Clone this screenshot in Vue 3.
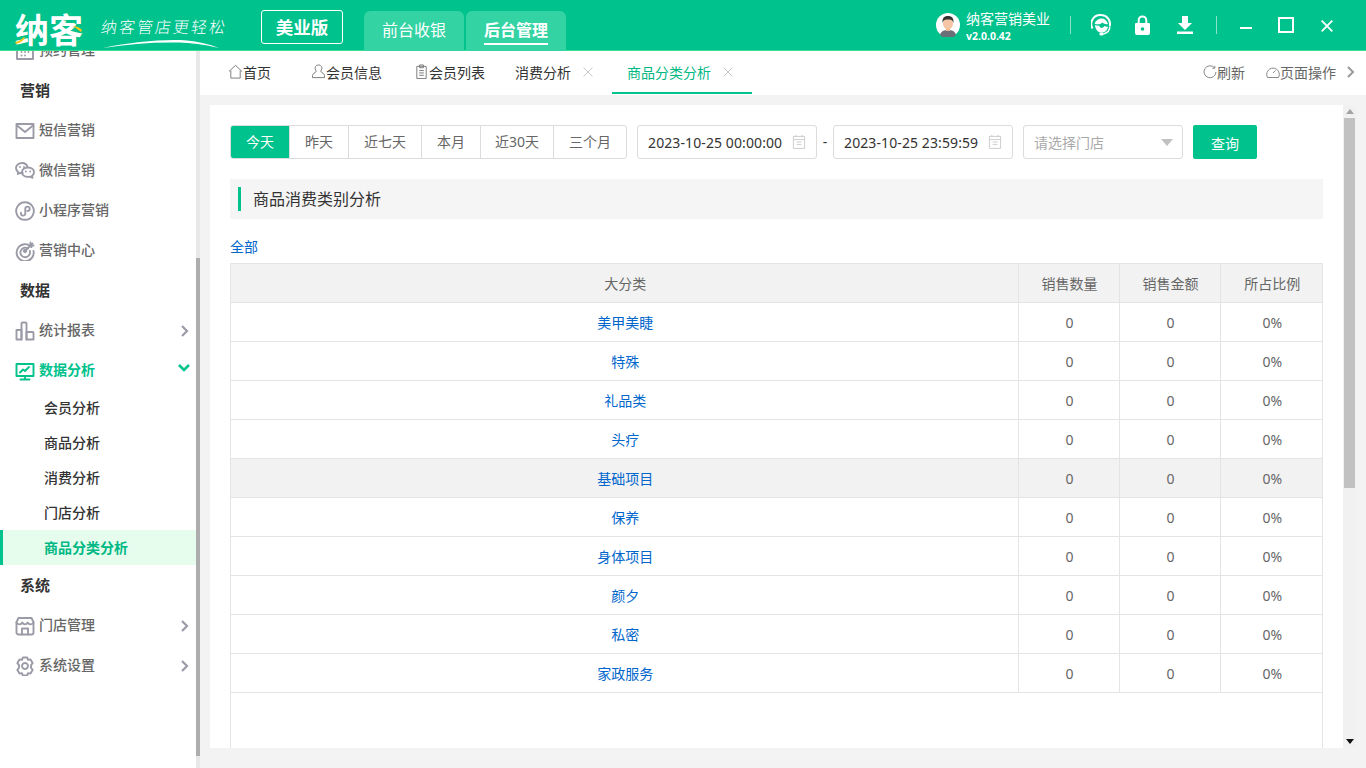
<script setup>
const icons = {
  cal: ['M3 3h14v15H3z', 'M3 7h14', 'M7 10h6M7 13h6', 'M6 1v3M14 1v3'],
  mail: ['M1.500 3h17v14h-17z', 'M2 4.500l8 6.500 8-6.500'],
  wx: ['M12.500 6.300C12 3.500 9.800 2 7 2 3.700 2 1 4.200 1 7c0 1.700.9 3 2.200 4L2.800 13l2.400-1.200c.8.200 1.700.3 2.600.2', 'M5 6h.01M9 6h.01', 'M13 6.500c3.300 0 6 2 6 4.700 0 1.500-.8 2.700-2 3.600l.5 2-2.400-1.200c-.7.200-1.400.3-2.100.3-3.300 0-6-2-6-4.700s2.700-4.700 6-4.700z', 'M10.800 10.500h.01M15.200 10.500h.01'],
  mini: ['M10 1.200a8.800 8.800 0 1 0 .01 0z', 'M6 11.800a2.200 2.200 0 1 0 4.300.6V7.800A2.200 2.200 0 1 1 12.500 10'],
  target: ['M16.500 6A8.500 8.500 0 1 0 18.500 10', 'M13 7.500A4.800 4.800 0 1 0 14.800 10', 'M10 10l7.500-7.500', 'M10 8.800a1.200 1.200 0 1 0 .01 0z', 'M15.500 1.500v3h3'],
  chart: ['M1.500 18.500V9h5v9.500z', 'M6.500 18.500V2.500a1 1 0 0 1 1-1h3a1 1 0 0 1 1 1v16', 'M11.500 18.500V11h6a1 1 0 0 1 1 1v6.500z'],
  screen: ['M1.500 3h17v12h-17z', 'M5 11.500l3-3 2 1.500 4-4', 'M10 15v3.500M5.500 18.500h9'],
  store: ['M3.500 2h13l2 4v10.500a2 2 0 0 1-2 2h-13a2 2 0 0 1-2-2V6z', 'M1.500 6.500c2 2.500 4.500 2.500 5.800 0 1.400 2.500 4 2.500 5.400 0 1.300 2.500 3.800 2.500 5.800 0', 'M7 18.500v-6h6v6'],
  gear: ['M7.800 1.500h4.400l.8 2.400 2.500-.5 2.200 3.800-1.700 1.900 0 2.800 1.700 1.900-2.200 3.800-2.500-.5-.8 2.400H7.800l-.8-2.400-2.500.5-2.200-3.800 1.700-1.900 0-2.800-1.700-1.900 2.200-3.800 2.500.5z', 'M10 7a3 3 0 1 0 .01 0z'],
  cog: ['M2 3h16v15H2z', 'M2 8h16', 'M6.500 11h.01M10 11h.01M13.500 11h.01M6.500 14.500h.01M10 14.500h.01'],
}
const menu = [
  { type: 'item', label: '预约管理', icon: 'cog' },
  { type: 'group', label: '营销' },
  { type: 'item', label: '短信营销', icon: 'mail' },
  { type: 'item', label: '微信营销', icon: 'wx' },
  { type: 'item', label: '小程序营销', icon: 'mini' },
  { type: 'item', label: '营销中心', icon: 'target' },
  { type: 'group', label: '数据' },
  { type: 'item', label: '统计报表', icon: 'chart', arrow: 'right' },
  { type: 'item', label: '数据分析', icon: 'screen', arrow: 'down', on: true },
  { type: 'sub', label: '会员分析' },
  { type: 'sub', label: '商品分析' },
  { type: 'sub', label: '消费分析' },
  { type: 'sub', label: '门店分析' },
  { type: 'sub', label: '商品分类分析', on: true },
  { type: 'group', label: '系统' },
  { type: 'item', label: '门店管理', icon: 'store', arrow: 'right' },
  { type: 'item', label: '系统设置', icon: 'gear', arrow: 'right' },
]
const tabs = [
  { label: '首页', icon: 'home', w: 83 },
  { label: '会员信息', icon: 'user', w: 103 },
  { label: '会员列表', icon: 'list', w: 101 },
  { label: '消费分析', close: true, w: 111 },
  { label: '商品分类分析', close: true, on: true, w: 140 },
]
const ranges = ['今天', '昨天', '近七天', '本月', '近30天', '三个月']
const rows = ['美甲美睫', '特殊', '礼品类', '头疗', '基础项目', '保养', '身体项目', '颜夕', '私密', '家政服务']
</script>

<template>
  <div class="app">
    <header class="top">
      <div class="logo">
        <span class="logo-main">纳客</span>
        <svg class="logo-accent" viewBox="0 0 72 38"><path d="M0 31c3-.5 6-2 9-5l1 1c-2 3-5 5-9 6zM58 15c3 0 6 1 9 4l-1 2c-3-2-5-4-8-6z" fill="#f5c518" /></svg>
      </div>
      <div class="slogan">
        <span>纳客管店更轻松</span>
        <svg viewBox="0 0 116 8"><path d="M0 8C30 2 60-1 84 .5 95 1.500 106 4 116 8 100 4 88 3 76 2.500 50 2 25 4 0 8z" fill="#fff" /></svg>
      </div>
      <div class="edition">美业版</div>
      <nav class="modes">
        <div class="mode">前台收银</div>
        <div class="mode mode-on"><span>后台管理</span></div>
      </nav>
      <div class="top-right">
        <svg class="avatar" viewBox="0 0 24 24">
          <circle cx="12" cy="12" r="12" fill="#fff" />
          <path d="M4 22c1-4 4-5 8-5s7 1 8 5a12 12 0 0 1-16 0z" fill="#6b7078" />
          <path d="M10 14h4v4h-4z" fill="#eeb58f" />
          <ellipse cx="12" cy="10.500" rx="5" ry="6" fill="#f5c6a5" />
          <path d="M6.500 10C6 4 9 3 12 3s6 1 5.500 7c-1-3-2-3.500-5.500-3.500S7.500 7 6.500 10z" fill="#333" />
        </svg>
        <div class="user">
          <div class="user-name">纳客营销美业</div>
          <div class="user-ver">v2.0.0.42</div>
        </div>
        <i class="sep sep-a"></i>
        <svg class="t-ico t-head" viewBox="0 0 20 22">
          <path d="M1.500 14.500A9 9 0 0 1 10 1a9 9 0 0 1 8.800 11" fill="none" stroke="#fff" stroke-width="2" />
          <path d="M3.500 9.500C5 6 8 4.500 10.500 4.500c3 0 5.500 2 6.500 5.500-2 .5-4 0-5.500-1.500C9.500 10.500 6 11 3.500 9.500z" fill="#fff" />
          <path d="M4 11c1.500.7 3 .8 4 .6 1 3 4 3 5.500.5 1 .6 2 .8 3.500.6-.5 3-3 6-6.500 6-3.500 0-6-3-6.500-7.700z" fill="#fff" />
          <path d="M18.800 12.500c0 4-2.500 6.500-6.500 7.500" fill="none" stroke="#fff" stroke-width="1.500" />
          <ellipse cx="10.500" cy="20" rx="2.200" ry="1.500" fill="#fff" />
        </svg>
        <svg class="t-ico t-lock" viewBox="0 0 15 20">
          <path d="M3.700 9V5.200a3.800 3.800 0 0 1 7.600 0V9" fill="none" stroke="#fff" stroke-width="2" />
          <path d="M1 8h13a1 1 0 0 1 1 1v9a2 2 0 0 1-2 2H2a2 2 0 0 1-2-2V9a1 1 0 0 1 1-1z" fill="#fff" />
          <circle cx="7.500" cy="14" r="1.800" fill="#00c28c" />
        </svg>
        <svg class="t-ico t-down" viewBox="0 0 16 18">
          <path d="M5 0h6v7h4l-7 7-7-7h4z" fill="#fff" />
          <path d="M0 15.500h16V18H0z" fill="#fff" />
        </svg>
        <i class="sep sep-b"></i>
        <i class="win-min"></i>
        <i class="win-max"></i>
        <svg class="win-close" viewBox="0 0 12 12"><path d="M.7.700l10.600 10.600M11.300.700L.7 11.300" stroke="#fff" stroke-width="1.800" /></svg>
      </div>
    </header>

    <div class="body">
      <aside class="side">
        <div class="side-list">
          <template v-for="m in menu" :key="m.label">
            <div v-if="m.type === 'group'" class="m-group">{{ m.label }}</div>
            <div v-else-if="m.type === 'item'" class="m-item" :class="{ 'm-on': m.on }">
              <svg class="m-ico" viewBox="0 0 20 20"><path v-for="d in icons[m.icon]" :key="d" :d="d" /></svg>
              <span class="m-text">{{ m.label }}</span>
              <svg v-if="m.arrow === 'right'" class="m-arrow" viewBox="0 0 10 12"><path d="M2 1l5 5-5 5" /></svg>
              <svg v-if="m.arrow === 'down'" class="m-arrow m-arrow-d" viewBox="0 0 12 10"><path d="M1 2l5 5 5-5" /></svg>
            </div>
            <div v-else class="m-sub" :class="{ 'm-sub-on': m.on }">{{ m.label }}</div>
          </template>
        </div>
        <div class="side-bar"><div class="side-thumb"></div></div>
      </aside>

      <main class="main">
        <div class="tabs">
          <div v-for="t in tabs" :key="t.label" class="tab" :class="{ 'tab-on': t.on }" :style="{ width: t.w + 'px' }">
            <svg v-if="t.icon === 'home'" class="tab-ico" viewBox="0 0 16 16"><path d="M1 8l7-6.500L15 8M3 7v8h10V7" /></svg>
            <svg v-if="t.icon === 'user'" class="tab-ico" viewBox="0 0 16 16"><path d="M8 1a3.500 3.500 0 0 1 3 5.500c-.7 1.300-.6 2 .5 2.500 2 1 3 2 3 5.500h-13c0-3.500 1-4.500 3-5.500 1.100-.5 1.200-1.200.5-2.500A3.500 3.500 0 0 1 8 1z" /></svg>
            <svg v-if="t.icon === 'list'" class="tab-ico" viewBox="0 0 16 16"><path d="M3 2.500h10v13H3zM6 1h4v3H6zM5.500 7h5M5.500 9.500h5M5.500 12h5" /></svg>
            <span>{{ t.label }}</span>
            <svg v-if="t.close" class="tab-x" viewBox="0 0 10 10"><path d="M.5.500l9 9M9.500.500l-9 9" /></svg>
          </div>
          <div class="tab-tools">
            <svg class="tool-ico" viewBox="0 0 14 14"><path d="M11.500 2.800A6 6 0 1 0 13 7M11.800.8v2.400H9.400" /></svg>
            <span class="tool-a">刷新</span>
            <svg class="tool-ico" viewBox="0 0 14 14"><path d="M1.500 12.500a6.300 6.300 0 1 1 11 0zM7 8l2.500-2.500" /></svg>
            <span>页面操作</span>
            <svg class="tool-arrow" viewBox="0 0 10 12"><path d="M2 1l5 5-5 5" /></svg>
          </div>
        </div>

        <div class="panel">
          <div class="content">
            <div class="filters">
              <div class="ranges">
                <div v-for="(r, i) in ranges" :key="r" class="range" :class="{ 'range-on': i === 0 }">{{ r }}</div>
              </div>
              <div class="date">
                <span>2023-10-25 00:00:00</span>
                <svg class="date-ico" viewBox="0 0 20 20"><path v-for="d in icons.cal" :key="d" :d="d" /></svg>
              </div>
              <span class="dash">-</span>
              <div class="date">
                <span>2023-10-25 23:59:59</span>
                <svg class="date-ico" viewBox="0 0 20 20"><path v-for="d in icons.cal" :key="d" :d="d" /></svg>
              </div>
              <div class="select">
                <span>请选择门店</span>
                <i class="caret"></i>
              </div>
              <button class="query" type="button">查询</button>
            </div>

            <div class="title"><i></i><span>商品消费类别分析</span></div>
            <a class="all">全部</a>

            <div class="table-wrap">
              <table class="grid">
                <colgroup>
                  <col />
                  <col class="col-n" />
                  <col class="col-n" />
                  <col class="col-l" />
                </colgroup>
                <thead>
                  <tr><th>大分类</th><th>销售数量</th><th>销售金额</th><th>所占比例</th></tr>
                </thead>
                <tbody>
                  <tr v-for="(r, i) in rows" :key="r" :class="{ hover: i === 4 }">
                    <td class="link">{{ r }}</td><td>0</td><td>0</td><td>0%</td>
                  </tr>
                </tbody>
              </table>
            </div>
          </div>
          <div class="vbar">
            <i class="vbar-up"></i>
            <div class="vbar-track"><div class="vbar-thumb"></div></div>
            <i class="vbar-down"></i>
          </div>
        </div>
      </main>
    </div>
  </div>
</template>

<style>
html, body { margin: 0; height: 100%; overflow: hidden; }
</style>

<style scoped>
.app {
  width: 1366px; height: 768px; display: flex; flex-direction: column; overflow: hidden;
  font-family: "Noto Sans", "Noto Sans CJK SC", sans-serif; font-size: 14px; color: #333;
  background: #f3f3f3;
}
.top {
  height: 50px; flex: none; display: flex; align-items: flex-start; background: #00c28c;
  border-bottom: 1px solid #3fdc8c; color: #fff; position: relative;
}
.logo { width: 72px; margin: 11px 0 0 15px; position: relative; height: 38px; flex: none; }
.logo-main { font-size: 34px; line-height: 38px; font-weight: 700; color: #fff; display: block; white-space: nowrap; }
.logo-accent { position: absolute; left: 0; top: 0; width: 72px; height: 38px; }
.slogan { width: 126px; margin: 16px 0 0 14px; position: relative; flex: none; }
.slogan span { display: block; font-size: 16px; letter-spacing: 2px; line-height: 22px; white-space: nowrap; transform: skewX(-8deg); font-weight: 300; }
.slogan svg { display: block; width: 116px; height: 8px; margin: 2px 0 0 2px; }
.edition {
  width: 80px; height: 32px; margin: 10px 0 0 34px; border: 1px solid #fff; border-radius: 3px; flex: none;
  text-align: center; line-height: 32px; font-size: 17.500px; font-weight: 700;
}
.modes { display: flex; gap: 2px; margin: 11px 0 0 21px; height: 40px; flex: none; }
.mode {
  width: 100px; height: 40px; background: #33d3a3; border-radius: 6px 6px 0 0;
  text-align: center; line-height: 38px; font-size: 16px; color: #fff;
}
.mode-on { font-weight: 700; }
.mode-on span { display: inline-block; line-height: 26px; margin-top: 6px; border-bottom: 2px solid #fff; }
.top-right { margin-left: auto; display: flex; align-items: center; height: 50px; padding-right: 33px; }
.avatar { width: 24px; height: 24px; margin-top: 0; flex: none; }
.user { margin-left: 6px; width: 84px; }
.user-name { font-size: 14px; line-height: 20px; white-space: nowrap; }
.user-ver { font-size: 10.500px; line-height: 12px; font-weight: 700; white-space: nowrap; margin-top: 1px; }
.sep { width: 1px; height: 18px; background: rgba(255, 255, 255, .55); display: block; }
.sep-a { margin-left: 20px; }
.sep-b { margin-left: 23px; }
.t-ico { display: block; flex: none; }
.t-head { width: 20px; height: 22px; margin-left: 20px; }
.t-lock { width: 15px; height: 20px; margin-left: 24px; }
.t-down { width: 16px; height: 18px; margin-left: 27px; margin-top: 0; }
.win-min { display: block; width: 12px; height: 2px; background: #fff; margin: 6px 0 0 23px; }
.win-max { display: block; width: 12px; height: 12px; border: 2px solid #fff; margin-left: 26px; }
.win-close { width: 12px; height: 12px; margin-left: 27px; margin-top: 2px; display: block; }

.body { flex: 1; min-height: 0; display: flex; }
.side { width: 200px; flex: none; background: #fff; display: flex; overflow: hidden; }
.side-list { width: 196px; flex: none; margin-top: -21px; }
.m-group { height: 40px; line-height: 40px; padding-left: 20px; font-size: 15px; font-weight: 700; color: #333; }
.m-item { height: 40px; display: flex; align-items: center; padding-left: 15px; color: #666; font-weight: 500; position: relative; }
.m-text { margin-top: -2px; }
.m-ico { width: 20px; height: 20px; margin-right: 4px; flex: none; fill: none; stroke: #9b9ba8; stroke-width: 1.900; stroke-linecap: round; stroke-linejoin: round; margin-top: 2px; }
.m-arrow { position: absolute; right: 6px; top: 15px; width: 10px; height: 12px; fill: none; stroke: #9b9ba8; stroke-width: 2.200; }
.m-arrow-d { width: 12px; height: 10px; top: 13px; right: 6px; stroke: #00c28c; stroke-width: 2.600; }
.m-on { color: #00c28c; font-weight: 700; }
.m-on .m-ico { stroke: #00c28c; }
.m-sub { height: 35px; line-height: 35px; padding-left: 44px; font-weight: 500; color: #333; }
.m-sub-on { background: #e6fdee; color: #00b884; font-weight: 700; position: relative; }
.m-sub-on::before { content: ""; position: absolute; left: 0; top: 0; bottom: 0; width: 3px; background: #00c28c; }
.side-bar { width: 4px; background: #e8e8e8; flex: none; }
.side-thumb { height: 498px; margin-top: 207px; background: #adadad; }

.main { flex: 1; min-width: 0; display: flex; flex-direction: column; }
.tabs { height: 44px; flex: none; background: #fff; display: flex; align-items: stretch; padding-left: 14px; }
.tab {
  display: flex; align-items: center; justify-content: flex-start; padding-left: 14px; box-sizing: border-box; color: #333;
  position: relative; white-space: nowrap; flex: none; padding-bottom: 3px;
}
.tab-ico { width: 15px; height: 15px; fill: none; stroke: #777; stroke-width: 1; flex: none; margin-right: 0; }
.tab-x { width: 10px; height: 10px; fill: none; stroke: #c9c9c9; stroke-width: 1; margin-left: 12px; }
.tab-on { color: #00b884; padding-left: 15px; }
.tab-on::after { content: ""; position: absolute; left: 0; right: 0; bottom: 1px; height: 2px; background: #00c28c; }
.tab-tools { margin-left: auto; display: flex; align-items: center; color: #666; padding-right: 10px; padding-bottom: 3px; }
.tool-ico { width: 14px; height: 14px; fill: none; stroke: #888; stroke-width: 1; }
.tool-a { margin-right: 21px; }
.tool-arrow { width: 10px; height: 12px; margin-left: 10px; fill: none; stroke: #999; stroke-width: 2; }

.panel { flex: 1; min-height: 0; margin: 10px 10px 20px; background: #fff; display: flex; overflow: hidden; }
.content { flex: 1; min-width: 0; padding: 20px 20px 0; display: flex; flex-direction: column; }
.filters { display: flex; height: 34px; flex: none; }
.ranges { display: flex; border: 1px solid #dcdcdc; border-radius: 3px; box-sizing: border-box; height: 34px; overflow: hidden; flex: none; }
.range { padding: 0 15px; line-height: 32px; color: #666; border-left: 1px solid #dcdcdc; white-space: nowrap; }
.range:first-child { border-left: 0; padding: 0 15px; }
.range:nth-child(5) { padding: 0 14px; }
.range-on { background: #00c28c; color: #fff; }
.date {
  width: 180px; height: 34px; margin-left: 10px; box-sizing: border-box; border: 1px solid #dcdcdc; border-radius: 3px;
  display: flex; align-items: center; padding-left: 10px; color: #333; white-space: nowrap; flex: none; letter-spacing: .1px;
}
.dash + .date { margin-left: 0; }
.date-ico { width: 16px; height: 16px; margin-left: auto; margin-right: 9px; fill: none; stroke: #ccc; stroke-width: 1.200; flex: none; }
.dash { width: 16px; text-align: center; line-height: 34px; color: #333; flex: none; }
.select {
  width: 160px; height: 34px; margin-left: 10px; box-sizing: border-box; border: 1px solid #dcdcdc; border-radius: 3px;
  display: flex; align-items: center; padding-left: 10px; color: #aaa; flex: none;
}
.caret { margin-left: auto; margin-right: 9px; width: 0; height: 0; border: 6px solid transparent; border-top: 7px solid #c0c0c0; border-bottom: 0; }
.query {
  width: 64px; height: 34px; margin-left: 10px; border: 0; border-radius: 2px; background: #00c28c; color: #fff;
  font: inherit; padding: 2px 0 0; flex: none;
}
.title {
  height: 40px; margin-top: 20px; background: #f5f5f5; display: flex; align-items: center; flex: none;
  font-size: 16px; color: #333;
}
.title span { margin-top: -3px; }
.title i { width: 3px; height: 24px; margin: 0 12px 0 8px; background: #00c28c; display: block; }
.all { display: block; margin-top: 18px; height: 26px; line-height: 20px; color: #0066cc; flex: none; width: 28px; }
.table-wrap {
  flex: 1; min-height: 0; box-sizing: border-box; border: 1px solid #e4e4e4; border-bottom: 0;
}
.grid { width: 100%; table-layout: fixed; border-collapse: collapse; }
.col-n { width: 101px; }
.col-l { width: 102px; }
.grid th, .grid td {
  height: 38px; padding: 0 0 0 2px; text-align: center; font-weight: 400; color: #666;
  border-bottom: 1px solid #e4e4e4; border-left: 1px solid #e4e4e4; box-sizing: content-box;
}
.grid th:first-child, .grid td:first-child { border-left: 0; }
.grid th { background: #f2f2f2; }
.grid td.link { color: #0066cc; }
.hover td { background: #f2f2f2; }
.vbar { width: 13px; flex: none; background: #f1f1f1; display: flex; flex-direction: column; align-items: center; }
.vbar-up { display: block; flex: none; margin: 4px 0 4px; width: 0; height: 0; border: 4px solid transparent; border-top: 0; border-bottom: 5px solid #a3a3a3; }
.vbar-track { flex: 1; width: 100%; }
.vbar-thumb { width: 11px; height: 370px; margin: 0 1px; background: #c1c1c1; }
.vbar-down { display: block; flex: none; margin: 4px 0 4px; width: 0; height: 0; border: 4px solid transparent; border-bottom: 0; border-top: 5px solid #111; }
</style>
